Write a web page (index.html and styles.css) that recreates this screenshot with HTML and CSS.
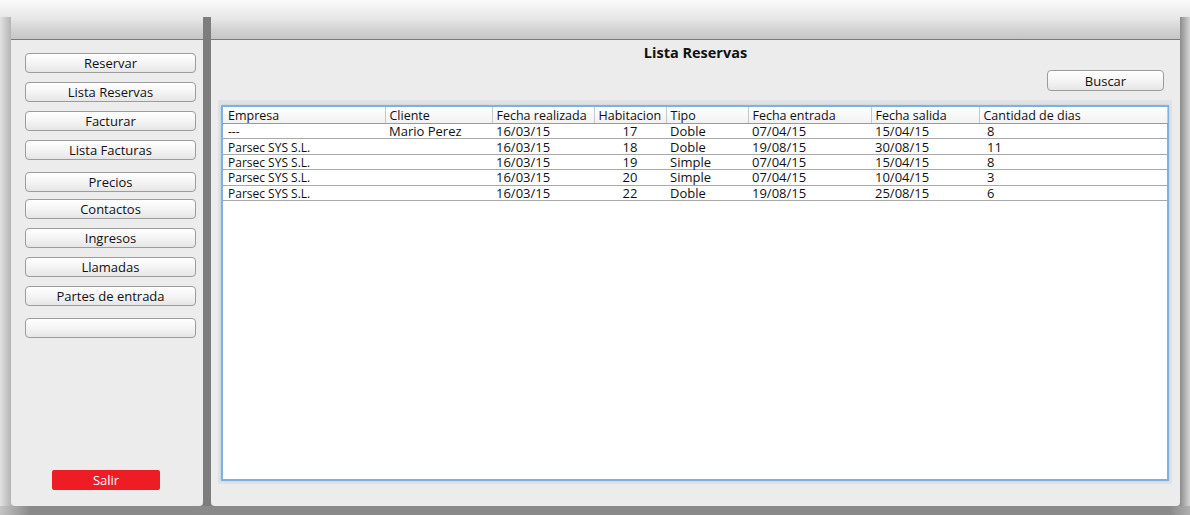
FILE: index.html
```html
<!DOCTYPE html>
<html lang="es">
<head>
<meta charset="utf-8">
<title>Lista Reservas</title>
<link rel="stylesheet" href="styles.css">
</head>
<body>
<div class="screen">
  <div class="topbar"></div>
  <div class="row">
    <div class="gutter-left"></div>
    <div class="win win-left">
      <div class="titlebar"></div>
      <div class="side-body">
        <div class="menu">
          <button class="btn">Reservar</button>
          <button class="btn">Lista Reservas</button>
          <button class="btn">Facturar</button>
          <button class="btn">Lista Facturas</button>
          <button class="btn gap-lg">Precios</button>
          <button class="btn gap-sm">Contactos</button>
          <button class="btn">Ingresos</button>
          <button class="btn">Llamadas</button>
          <button class="btn">Partes de entrada</button>
          <button class="btn gap-lg"></button>
        </div>
        <button class="btn-exit">Salir</button>
      </div>
    </div>
    <div class="sep"></div>
    <div class="win win-main">
      <div class="titlebar"></div>
      <div class="main-body">
        <h1 class="heading">Lista Reservas</h1>
        <div class="toolbar"><button class="btn btn-search">Buscar</button></div>
        <div class="table-wrap">
          <div class="table-frame">
            <table class="grid">
              <colgroup>
                <col class="c1"><col class="c2"><col class="c3"><col class="c4"><col class="c5"><col class="c6"><col class="c7"><col class="c8"><col>
              </colgroup>
              <thead>
                <tr><th>Empresa</th><th>Cliente</th><th>Fecha realizada</th><th>Habitacion</th><th>Tipo</th><th>Fecha entrada</th><th>Fecha salida</th><th>Cantidad de dias</th><th></th></tr>
              </thead>
              <tbody>
                <tr><td>---</td><td>Mario Perez</td><td>16/03/15</td><td class="num">17</td><td>Doble</td><td>07/04/15</td><td>15/04/15</td><td class="days">8</td><td></td></tr>
                <tr><td>Parsec SYS S.L.</td><td></td><td>16/03/15</td><td class="num">18</td><td>Doble</td><td>19/08/15</td><td>30/08/15</td><td class="days">11</td><td></td></tr>
                <tr><td>Parsec SYS S.L.</td><td></td><td>16/03/15</td><td class="num">19</td><td>Simple</td><td>07/04/15</td><td>15/04/15</td><td class="days">8</td><td></td></tr>
                <tr><td>Parsec SYS S.L.</td><td></td><td>16/03/15</td><td class="num">20</td><td>Simple</td><td>07/04/15</td><td>10/04/15</td><td class="days">3</td><td></td></tr>
                <tr><td>Parsec SYS S.L.</td><td></td><td>16/03/15</td><td class="num">22</td><td>Doble</td><td>19/08/15</td><td>25/08/15</td><td class="days">6</td><td></td></tr>
              </tbody>
            </table>
          </div>
        </div>
      </div>
    </div>
    <div class="gutter-right"></div>
  </div>
</div>
</body>
</html>
```

FILE: styles.css
```css
* { box-sizing: border-box; }
html, body { margin: 0; padding: 0; }
body {
  width: 1190px;
  height: 515px;
  overflow: hidden;
  font-family: "Open Sans", "DejaVu Sans", sans-serif;
  color: #111;
}
.screen {
  width: 1190px;
  height: 515px;
  background: linear-gradient(90deg, #c4c4c4 0px, #8a8a8a 30px, #8a8a8a 1170px, #b0b0b0 1190px);
  display: flex;
  flex-direction: column;
}
.topbar {
  height: 17px;
  flex: none;
  background: linear-gradient(180deg, #fbfbfb, #e8e8e8);
}
.row {
  display: flex;
  height: 489px;
  flex: none;
}
.gutter-left {
  width: 11px;
  flex: none;
  background: linear-gradient(90deg, #e2e2e2, #b4b4b4);
}
.gutter-right {
  width: 10px;
  flex: none;
  background: linear-gradient(90deg, #8c8c8c, #d6d6d6);
}
.sep {
  width: 8px;
  flex: none;
  background: #7d7d7d;
}
.win {
  background: #ececec;
  display: flex;
  flex-direction: column;
  border-radius: 0 0 4px 4px;
  overflow: hidden;
}
.win-left { width: 192px; flex: none; }
.win-main { width: 969px; flex: none; }
.titlebar {
  height: 23px;
  flex: none;
  background: linear-gradient(180deg, #e9e9e9 0%, #d2d2d2 60%, #c6c6c6 100%);
  border-bottom: 1px solid #7a7a7a;
}
.side-body {
  flex: 1;
  display: flex;
  flex-direction: column;
  padding: 13px 0 16px 14px;
}
.menu {
  display: flex;
  flex-direction: column;
  gap: 9px;
}
.btn {
  width: 171px;
  height: 20px;
  padding: 0;
  border: 1px solid #9c9c9c;
  border-radius: 4px;
  background: linear-gradient(180deg, #ffffff 0%, #f4f4f4 50%, #e6e6e6 100%);
  font-family: "Open Sans", "DejaVu Sans", sans-serif;
  font-size: 13px;
  line-height: 18px;
  color: #111;
  text-align: center;
}
.gap-lg { margin-top: 3px; }
.gap-sm { margin-top: -2px; }
.btn-exit {
  margin-top: auto;
  margin-left: 27px;
  width: 108px;
  height: 20px;
  padding: 0;
  border: none;
  border-radius: 2px;
  background: #ee1c25;
  color: #fff;
  font-family: "Open Sans", "DejaVu Sans", sans-serif;
  font-size: 13px;
  line-height: 20px;
}
.main-body {
  flex: 1;
  display: flex;
  flex-direction: column;
  padding: 3px 0 0;
}
.heading {
  margin: 0;
  text-align: center;
  font-size: 14.5px;
  font-weight: bold;
  line-height: 20px;
  color: #111;
}
.toolbar {
  display: flex;
  justify-content: flex-end;
  padding: 7px 16px 0 0;
}
.btn-search {
  width: 117px;
  height: 21px;
}
.table-wrap {
  margin: 9px 0 0 7px;
  width: 954px;
  height: 384px;
  background: #e2e2e2;
  padding: 5px 3px 3px 3px;
}
.table-frame {
  width: 948px;
  height: 376px;
  background: #fff;
  border: 2px solid #7fb0e0;
  box-shadow: 0 0 2px #a9cbef;
  padding: 0;
}
.grid {
  width: 944px;
  border-collapse: collapse;
  table-layout: fixed;
  font-size: 13px;
}
.c1 { width: 162px; }
.c2 { width: 107px; }
.c3 { width: 102px; }
.c4 { width: 72px; }
.c5 { width: 82px; }
.c6 { width: 123px; }
.c7 { width: 108px; }
.c8 { width: 188px; }
.grid th {
  font-weight: normal;
  font-size: 12.5px;
  text-align: left;
  height: 16px;
  padding: 1px 0 0 4px;
  line-height: 15px;
  white-space: nowrap;
  overflow: hidden;
  background: linear-gradient(180deg, #ffffff, #f1f1f1);
  border-left: 1px solid #c8c8c8;
  border-bottom: 1px solid #9a9a9a;
}
.grid th:first-child { border-left: none; padding-left: 5px; }
.grid tbody tr { height: 15.4px; }
.grid td {
  padding: 1px 0 0 4px;
  line-height: 13px;
  white-space: nowrap;
  border-bottom: 1px solid #a9a9a9;
}
.grid td:first-child { padding-left: 5px; font-size: 12px; }
.grid td.num { text-align: center; padding-left: 0; }
.grid td.days { padding-left: 8px; }
```
